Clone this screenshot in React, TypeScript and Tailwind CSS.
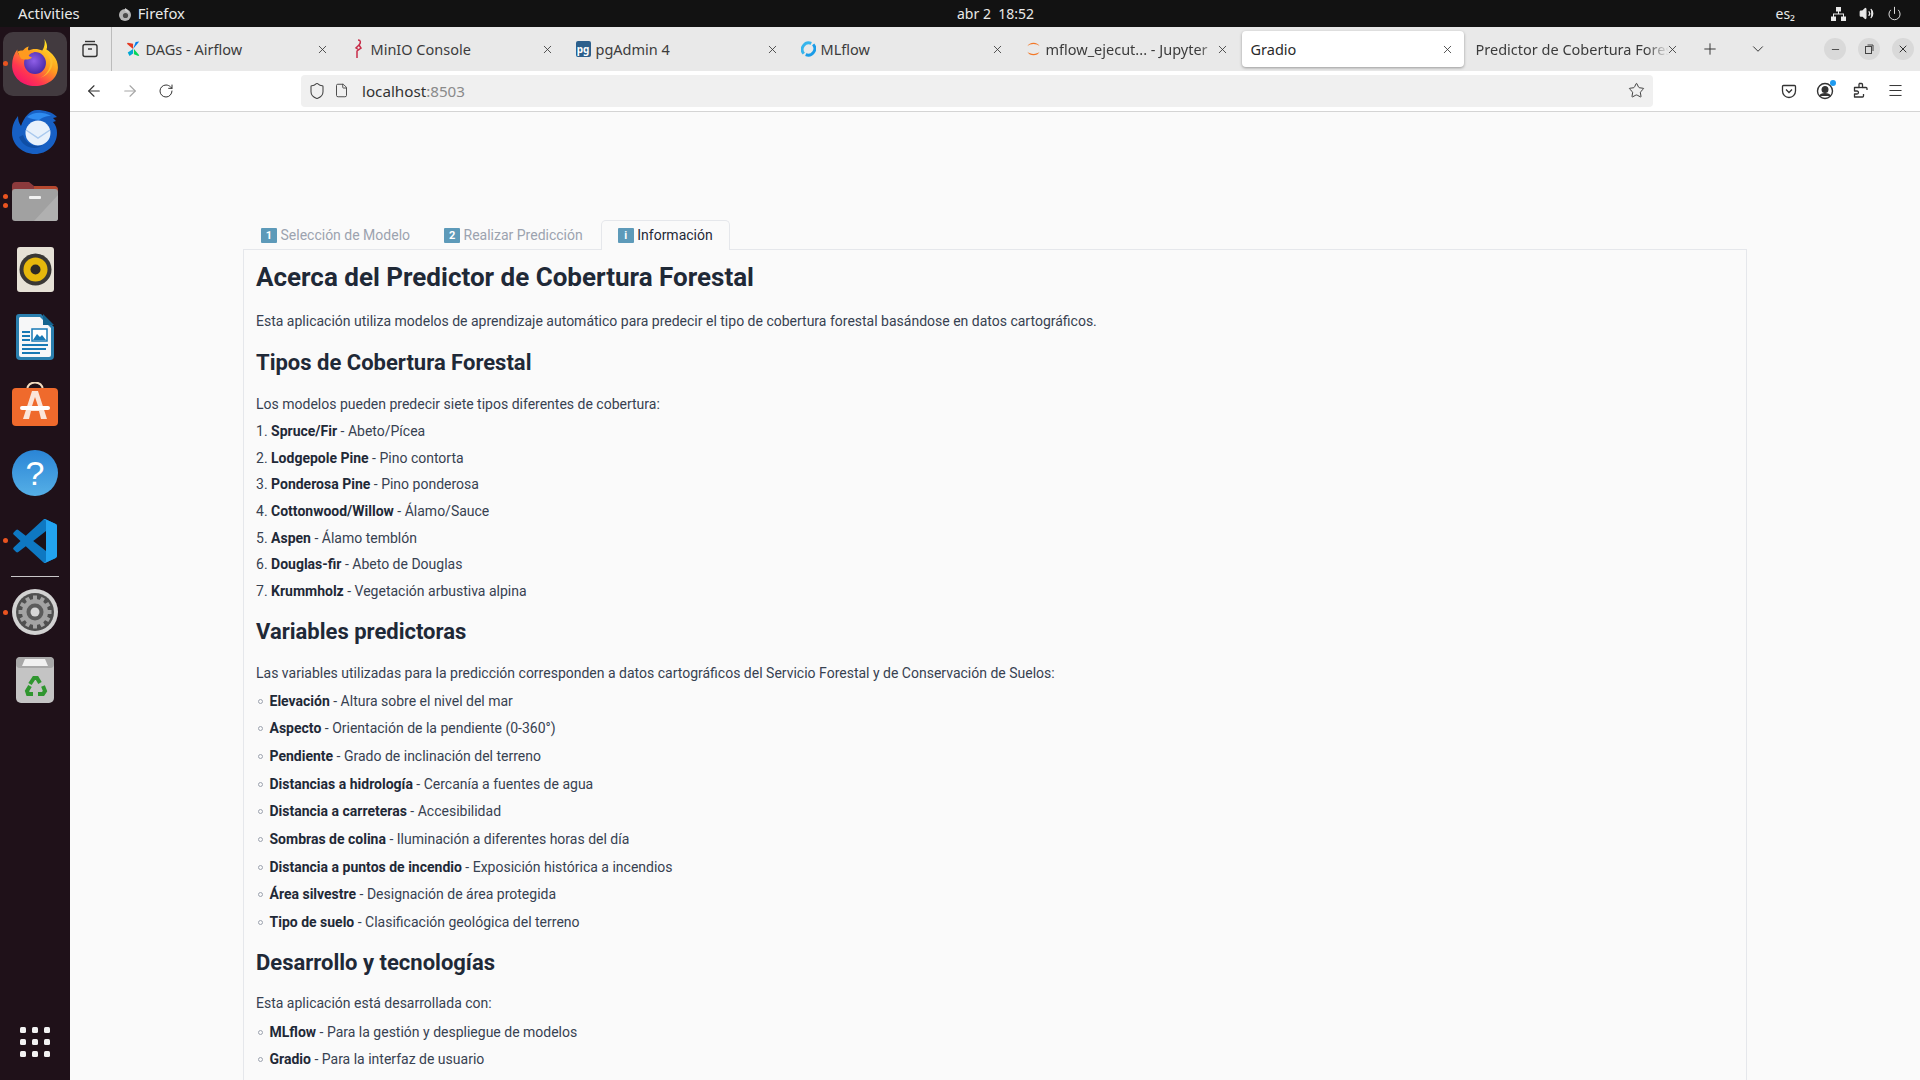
import React from "react";
import { ArrowLeft, ArrowRight, RotateCw, Shield, File, Star, Menu, Plus, ChevronDown, X, Minus, Volume2, Power } from "lucide-react";

const ui = "font-['Noto_Sans','Liberation_Sans',sans-serif]";

function Firefox({ size = 50 }: { size?: number }) {
  return (
    <svg width={size} height={size} viewBox="0 0 48 48">
      <defs>
        <linearGradient id="ffa" x1="0.8" y1="0.1" x2="0.2" y2="0.95">
          <stop offset="0" stopColor="#ffe226" />
          <stop offset="0.4" stopColor="#ff9a1f" />
          <stop offset="0.75" stopColor="#ff3750" />
          <stop offset="1" stopColor="#f5156c" />
        </linearGradient>
        <radialGradient id="ffb" cx="0.45" cy="0.4" r="0.6">
          <stop offset="0" stopColor="#8f5fe8" />
          <stop offset="1" stopColor="#4a2aa8" />
        </radialGradient>
      </defs>
      <path d="M33 2c3 5 3 8 2 10 5 3 11 9 11 17 0 11-10 18-22 18S2 39 2 27c0-6 2-11 5-15 0 3 1 5 3 6 1-4 4-8 8-9-1 2-1 3 0 4 3-2 9-2 13 0 2-3 3-7 2-11z" fill="url(#ffa)" />
      <circle cx="24" cy="25" r="10.5" fill="url(#ffb)" />
      <path d="M7 14c4-2 7-1 9 0 2-1 5-1 7 1-3 0-5 2-5 3 0 1 3 1 3 2-2 2-7 2-9 1-2 1-3-4-5-7z" fill="#ff9a1f" />
      <path d="M34 14c4 4 6 10 4 15-1 4-5 9-9 10 5-1 12-7 12-15 0-4-3-8-7-10z" fill="#ffbd2e" />
    </svg>
  );
}

function Thunderbird() {
  return (
    <svg width="50" height="50" viewBox="0 0 50 50">
      <path d="M27 2c8 0 15 2 20 7l-4 1 3 3-3 1c3 3 4 7 4 11 0 12-10 21-22 21S2 37 2 25c0-7 2-12 6-17 0 4 1 7 3 10C14 9 20 2 27 2z" fill="#1760c4" />
      <path d="M17 9c6-5 16-6 24-1-6 0-9 2-12 4-5-1-8-1-12-3z" fill="#2f8cf0" />
      <circle cx="28" cy="25" r="12.500" fill="#e8f1fb" />
      <path d="M16 22l12 8 12-8" fill="none" stroke="#a9c9ee" strokeWidth="1.500" />
      <path d="M13 27c3 9 12 13 20 10-7 6-20 3-24-8z" fill="#0f4ea5" />
    </svg>
  );
}

function Files() {
  return (
    <svg width="46" height="40" viewBox="0 0 46 40">
      <path d="M0 5a4 4 0 0 1 4-4h13l5 4h20a4 4 0 0 1 4 4v8H0z" fill="#8c3a3c" />
      <path d="M22 5h20a4 4 0 0 1 4 4v8H22z" fill="#b5482f" />
      <rect y="8" width="46" height="32" rx="3" fill="#a1a1a1" />
      <path d="M46 14v23a3 3 0 0 1-3 3H22z" fill="#b0b0b0" />
      <rect x="17" y="15" width="12" height="3" rx="1" fill="#f2f2f2" />
    </svg>
  );
}

function Rhythmbox() {
  return (
    <div className="w-[37px] h-[45px] rounded-[3px] bg-[#e6e1d6] flex items-center justify-center">
      <svg width="33" height="33" viewBox="0 0 33 33">
        <circle cx="16.500" cy="16.500" r="16" fill="#3a3835" />
        <circle cx="16.500" cy="16.500" r="12" fill="#e6b80c" />
        <circle cx="16.500" cy="16.500" r="5" fill="#2c2a26" />
      </svg>
    </div>
  );
}

function Writer() {
  return (
    <svg width="38" height="46" viewBox="0 0 38 46">
      <path d="M3 0h22l13 13v29a4 4 0 0 1-4 4H4a4 4 0 0 1-4-4V3a3 3 0 0 1 3-3z" fill="#2a7fae" />
      <path d="M4 3h20l11 11v27a2 2 0 0 1-2 2H5a2 2 0 0 1-2-2V4z" fill="#f6f7f8" />
      <path d="M27 0l11 11H27z" fill="#14648f" />
      <g fill="#1779b5">
        <rect x="6" y="17" width="8" height="2" />
        <rect x="6" y="21" width="8" height="2" />
        <rect x="6" y="25" width="8" height="2" />
        <rect x="6" y="30" width="26" height="2" />
        <rect x="6" y="34" width="24" height="2" />
        <rect x="6" y="38" width="18" height="2" />
      </g>
      <rect x="16" y="15" width="15" height="12" fill="#fff" stroke="#1779b5" strokeWidth="1.500" />
      <path d="M17 26l4-6 3 3 2-2 4 5z" fill="#1779b5" />
    </svg>
  );
}

function Software() {
  return (
    <svg width="46" height="46" viewBox="0 0 46 46">
      <path d="M15 8c0-10 16-10 16 0" fill="none" stroke="#f2dcc0" strokeWidth="2" />
      <rect y="6" width="46" height="38" rx="4" fill="#ef6a2c" />
      <path d="M20 9h6l9 28h-6l-2-8H19l-2 8h-6z" fill="#fbe4d8" />
      <path d="M23 15l-3 9h6z" fill="#ef6a2c" />
      <rect x="8" y="24" width="30" height="4" rx="2" fill="#fff" />
    </svg>
  );
}

function Help() {
  return (
    <div className="w-[46px] h-[46px] rounded-full bg-gradient-to-b from-[#2a85d6] to-[#55afe6] flex items-center justify-center">
      <span className="text-white text-[34px] leading-none font-['Liberation_Sans',sans-serif]">?</span>
    </div>
  );
}

function VSCode() {
  return (
    <svg width="44" height="44" viewBox="0 0 100 100">
      <path d="M96 11 75 1a6 6 0 0 0-7 1L29 38 12 25a4 4 0 0 0-5 0L2 30a4 4 0 0 0 0 6l15 14L2 64a4 4 0 0 0 0 6l5 5a4 4 0 0 0 5 0l17-13 39 36a6 6 0 0 0 7 1l21-10a6 6 0 0 0 4-6V17a6 6 0 0 0-4-6z" fill="#0e78c2" />
      <path d="M75 73 46 50l29-23z" fill="#1b1018" />
      <path d="M68 2a6 6 0 0 1 7-1l21 10a6 6 0 0 1 4 6v66a6 6 0 0 1-4 6L75 99a6 6 0 0 1-7-1c3 2 7 0 7-3V5c0-3-4-5-7-3z" fill="#22a3f0" />
    </svg>
  );
}

function Settings() {
  const teeth = [0, 30, 60, 90, 120, 150];
  return (
    <svg width="46" height="46" viewBox="0 0 46 46">
      <circle cx="23" cy="23" r="23" fill="#d2d2d2" />
      <circle cx="23" cy="23" r="19" fill="#4f4f4f" />
      {teeth.map((a) => (
        <rect key={a} x="21" y="6.500" width="4" height="33" fill="#a3a3a3" transform={`rotate(${a} 23 23)`} />
      ))}
      <circle cx="23" cy="23" r="13" fill="#a3a3a3" />
      <circle cx="23" cy="23" r="8.500" fill="#5c5c5c" />
      <circle cx="23" cy="23" r="4.500" fill="#d8d8d8" />
    </svg>
  );
}

function Trash() {
  return (
    <svg width="38" height="46" viewBox="0 0 38 46">
      <rect width="38" height="46" rx="5" fill="#c4c4c4" />
      <rect x="0" y="0" width="38" height="11" rx="4" fill="#a8a8a8" />
      <path d="M6 9l3-7h20l3 7z" fill="#f1f1f1" />
      <g fill="none" stroke="#2f962f" strokeWidth="4">
        <path d="M14 27l4-6h3l3 5" />
        <path d="M27 29l2 5-2 3h-5" />
        <path d="M17 37h-5l-1-3 3-5" />
      </g>
    </svg>
  );
}

function Dot({ top }: { top: number }) {
  return <span className="absolute left-[3px] w-[5px] h-[5px] rounded-full bg-[#e95420]" style={{ top }} />;
}

function DockItem({ children, dots = [] }: { children: React.ReactNode; dots?: number[] }) {
  return (
    <div className="relative h-[68px] w-full flex items-center justify-center">
      {dots.map((d) => (
        <Dot key={d} top={d} />
      ))}
      {children}
    </div>
  );
}

function Dock() {
  return (
    <aside className="w-[70px] shrink-0 bg-[#1f1119] flex flex-col items-center pt-[4px] pb-[23px]">
      <DockItem dots={[30]}>
        <div className="w-[64px] h-[64px] rounded-[10px] bg-[#423a3f] flex items-center justify-center mb-[3px] pb-[3px]">
          <Firefox />
        </div>
      </DockItem>
      <DockItem><Thunderbird /></DockItem>
      <DockItem dots={[27, 36]}><Files /></DockItem>
      <DockItem><Rhythmbox /></DockItem>
      <DockItem><Writer /></DockItem>
      <DockItem><Software /></DockItem>
      <DockItem><Help /></DockItem>
      <DockItem dots={[31]}><VSCode /></DockItem>
      <div className="w-[48px] h-px bg-[#c9c6c8] mt-[1px] mb-[1px]" />
      <DockItem dots={[32]}><Settings /></DockItem>
      <DockItem><Trash /></DockItem>
      <div className="mt-auto grid grid-cols-3 gap-[6px]">
        {Array.from({ length: 9 }).map((_, i) => (
          <span key={i} className="w-[6px] h-[6px] rounded-[1.500px] bg-[#f2f2f2]" />
        ))}
      </div>
    </aside>
  );
}

function TopBar() {
  return (
    <header className={`${ui} h-[27px] shrink-0 bg-[#121212] text-[#e9e9e9] text-[14px] flex items-center relative`}>
      <span className="ml-[18px] text-[14.800px]">Activities</span>
      <span className="ml-[38px] flex items-center gap-[6px] text-[14.800px]">
        <svg width="14" height="14" viewBox="0 0 14 14">
          <circle cx="7" cy="8" r="6" fill="#b5b5b5" />
          <circle cx="7.500" cy="8.500" r="2.600" fill="#4a4a4a" />
          <path d="M7 1c2 1 4 3 4 5L7 4z" fill="#d0d0d0" />
        </svg>
        Firefox
      </span>
      <span className="absolute left-[957px] whitespace-pre">abr 2  18:52</span>
      <span className="ml-auto mr-[36px]">es₂</span>
      <span className="flex items-center gap-[13px] mr-[18px] text-[#e9e9e9]">
        <svg width="15" height="14" viewBox="0 0 15 14" fill="currentColor">
          <rect x="5" y="0" width="5" height="4.500" />
          <rect x="0" y="9.500" width="5" height="4.500" />
          <rect x="10" y="9.500" width="5" height="4.500" />
          <path d="M7 4h1v2.500h5V10h-1V7.500H3V10H2V6.500h5z" />
        </svg>
        <Volume2 size={15} strokeWidth={2} fill="currentColor" />
        <Power size={15} strokeWidth={1.500} />
      </span>
    </header>
  );
}

type TabData = { title: string; icon: React.ReactNode; active?: boolean; fade?: boolean };

const tabs: TabData[] = [
  {
    title: "DAGs - Airflow",
    icon: (
      <svg width="17" height="18" viewBox="0 0 17 18">
        <path d="M8 9 1 3l1-1 6 1z" fill="#e43921" />
        <path d="M8 9l3-8 4-.5z" fill="#017cee" />
        <path d="M9 9l6 7-1 1-5-2z" fill="#04d659" />
        <path d="M8 9 2 13l2 4 4-3z" fill="#00a7d4" />
      </svg>
    ),
  },
  {
    title: "MinIO Console",
    icon: (
      <svg width="12" height="20" viewBox="0 0 12 20">
        <path d="M6 1c3 0 3 3 1 5l2 3-4 3v7M7 6 4 9l3 2" fill="none" stroke="#c72c48" strokeWidth="1.500" />
      </svg>
    ),
  },
  {
    title: "pgAdmin 4",
    icon: (
      <div className="w-[16px] h-[16px] rounded-[2px] bg-[#2c5f8c] flex items-center justify-center text-white text-[10px] font-bold leading-none">
        pg
      </div>
    ),
  },
  {
    title: "MLflow",
    icon: (
      <svg width="18" height="18" viewBox="0 0 16 16">
        <path d="M3 13A7 7 0 0 1 11 2" fill="none" stroke="#37b5ec" strokeWidth="3" />
        <path d="M13 3a7 7 0 0 1-8 11" fill="none" stroke="#1a9ce8" strokeWidth="3" />
      </svg>
    ),
  },
  {
    title: "mflow_ejecut... - Jupyter",
    fade: true,
    icon: (
      <svg width="18" height="20" viewBox="0 0 16 18">
        <path d="M1.500 6c2-5 11-5 13 0-3-3-10-3-13 0zM1.500 12c2 5 11 5 13 0-3 3-10 3-13 0z" fill="#f37726" />
      </svg>
    ),
  },
  { title: "Gradio", active: true, icon: null },
  { title: "Predictor de Cobertura Forestal", fade: true, icon: null },
];

function Tab({ t }: { t: TabData }) {
  return (
    <div
      className={`relative h-[36px] w-[222px] shrink-0 flex items-center rounded-[4px] mr-[3px] pl-[9px] pr-[8px] ${
        t.active ? "bg-white shadow-[0_1px_3px_rgba(0,0,0,0.35)] text-[#2a2a2a]" : "text-[#3c3c3c]"
      }`}
    >
      {t.icon && <span className="w-[15px] shrink-0 flex items-center justify-center mr-[5px]">{t.icon}</span>}
      <span
        className={`overflow-hidden whitespace-nowrap flex-1 mr-[12px] pt-[2px] ${
          t.fade ? "[mask-image:linear-gradient(to_right,black_88%,transparent)]" : ""
        }`}
      >
        {t.title}
      </span>
      <X size={13} strokeWidth={1.500} className="absolute right-[10px] text-[#333]" />
    </div>
  );
}

function TabBar() {
  return (
    <div className={`${ui} h-[44px] bg-[#e9e9e9] flex items-center text-[14.500px]`}>
      <div className="w-[21px] flex justify-center ml-[9px] shrink-0">
        <svg width="18" height="18" viewBox="0 0 18 18" fill="none" stroke="#333" strokeWidth="1.400">
          <path d="M4 1.500h10" />
          <rect x="2" y="4.500" width="14" height="12" rx="2" />
          <path d="M7 9h4" />
        </svg>
      </div>
      <div className="w-px h-[44px] bg-[#bcbcbc] ml-[11px] mr-[4.500px]" />
      <div className="flex items-center">
        {tabs.map((t) => (
          <Tab key={t.title} t={t} />
        ))}
      </div>
      <Plus size={18} strokeWidth={1.300} className="ml-[9px] text-[#333] shrink-0" />
      <ChevronDown size={18} strokeWidth={1.300} className="ml-[30px] text-[#333] shrink-0" />
      <div className="ml-auto mr-[6px] flex items-center gap-[12px]">
        <span className="w-[22px] h-[22px] rounded-full bg-[#d9d9d9] flex items-center justify-center">
          <Minus size={11} className="text-[#444]" />
        </span>
        <span className="w-[22px] h-[22px] rounded-full bg-[#d9d9d9] flex items-center justify-center">
          <svg width="10" height="10" viewBox="0 0 10 10" fill="none" stroke="#444" strokeWidth="1">
            <rect x="1.500" y="2.500" width="6" height="7" />
            <path d="M3.500 1h5.500v6" />
          </svg>
        </span>
        <span className="w-[22px] h-[22px] rounded-full bg-[#d9d9d9] flex items-center justify-center">
          <X size={12} className="text-[#333]" />
        </span>
      </div>
    </div>
  );
}

function ToolBar() {
  return (
    <div className={`${ui} h-[41px] bg-white border-b border-[#d4d4d4] flex items-center shrink-0 pb-[1px]`}>
      <ArrowLeft size={18} strokeWidth={1.500} className="ml-[15px] text-[#333]" />
      <ArrowRight size={18} strokeWidth={1.500} className="ml-[18px] text-[#a6a6a6]" />
      <RotateCw size={16} strokeWidth={1.500} className="ml-[19px] text-[#333]" />
      <div className="ml-[127px] w-[1352px] h-[32px] rounded-[4px] bg-[#f0f0f0] flex items-center text-[15.200px]">
        <Shield size={18} strokeWidth={1.400} className="ml-[7px] text-[#444]" />
        <File size={15} strokeWidth={1.500} className="ml-[8px] text-[#444]" />
        <span className="ml-[13px] text-[#333] pt-[1px]">localhost<span className="text-[#8a8a8a]">:8503</span></span>
        <Star size={17} strokeWidth={1.300} className="ml-auto mr-[8px] text-[#333]" />
      </div>
      <div className="ml-auto mr-[16px] flex items-center gap-[18px] text-[#333]">
        <svg width="16" height="16" viewBox="0 0 16 16" fill="none" stroke="#333" strokeWidth="1.300" className="mr-[1px]">
          <path d="M2.500 2.500h11a1 1 0 0 1 1 1V8a6.500 6.500 0 0 1-13 0V3.500a1 1 0 0 1 1-1z" />
          <path d="M5 6.500l3 3 3-3" />
        </svg>
        <span className="relative w-[18px] h-[18px]">
          <svg width="18" height="18" viewBox="0 0 18 18" fill="none" stroke="#333" strokeWidth="1.400">
            <circle cx="9" cy="9" r="7.500" />
            <circle cx="9" cy="7.500" r="2.800" fill="#333" />
            <path d="M4 14c1-3 9-3 10 0" fill="#333" />
          </svg>
          <span className="absolute top-[-2px] right-[-2px] w-[6px] h-[6px] rounded-full bg-[#1f9bf0]" />
        </span>
        <svg width="17" height="17" viewBox="0 0 17 17" fill="none" stroke="#333" strokeWidth="1.300" strokeLinejoin="round">
          <path d="M7 1.500h2.500a1 1 0 0 1 1 1V5.500H14a1 1 0 0 1 1 1V8M7 1.500v4H2.500v3.500H5a1.500 1.500 0 0 1 0 3H2.500v3h8a1 1 0 0 0 1-1V12" />
          <path d="M7 5.500h3.500" />
        </svg>
        <Menu size={17} strokeWidth={1.400} />
      </div>
    </div>
  );
}

function Keycap({ label }: { label: string }) {
  return (
    <span className="flex w-[16px] h-[15px] mr-[3.500px] items-center justify-center rounded-[1px] bg-[#5d9ab9] text-white text-[11px] font-bold leading-none shrink-0">
      {label}
    </span>
  );
}

const especies: [string, string][] = [
  ["Spruce/Fir", "Abeto/Pícea"],
  ["Lodgepole Pine", "Pino contorta"],
  ["Ponderosa Pine", "Pino ponderosa"],
  ["Cottonwood/Willow", "Álamo/Sauce"],
  ["Aspen", "Álamo temblón"],
  ["Douglas-fir", "Abeto de Douglas"],
  ["Krummholz", "Vegetación arbustiva alpina"],
];

const variables: [string, string][] = [
  ["Elevación", "Altura sobre el nivel del mar"],
  ["Aspecto", "Orientación de la pendiente (0-360°)"],
  ["Pendiente", "Grado de inclinación del terreno"],
  ["Distancias a hidrología", "Cercanía a fuentes de agua"],
  ["Distancia a carreteras", "Accesibilidad"],
  ["Sombras de colina", "Iluminación a diferentes horas del día"],
  ["Distancia a puntos de incendio", "Exposición histórica a incendios"],
  ["Área silvestre", "Designación de área protegida"],
  ["Tipo de suelo", "Clasificación geológica del terreno"],
];

const tecnologias: [string, string][] = [
  ["MLflow", "Para la gestión y despliegue de modelos"],
  ["Gradio", "Para la interfaz de usuario"],
];

function Bullets({ items }: { items: [string, string][] }) {
  return (
    <ul>
      {items.map(([b, d]) => (
        <li key={b} className="h-[27.700px] flex items-center">
          <span className="w-[5px] h-[5px] rounded-full border border-[#9ca3af] ml-[2px] mr-[6.500px] shrink-0" />
          <span>
            <b className="font-bold text-[#1f2937]">{b}</b> - {d}
          </span>
        </li>
      ))}
    </ul>
  );
}

function H2({ children, className = "" }: { children: React.ReactNode; className?: string }) {
  return <h2 className={`text-[22px] leading-[30px] font-bold text-[#1f2937] ${className}`}>{children}</h2>;
}

function Page() {
  return (
    <main className="flex-1 min-h-0 overflow-hidden bg-[#fafafa] font-['Roboto',sans-serif] text-[14px] text-[#374151] pt-[108px]">
      <div className="ml-[173px] w-[1504px]">
        <div className="flex h-[29px] items-center relative z-10">
          <div className="ml-[18px] text-[#9ca3af] flex items-center pt-[1px]"><Keycap label="1" />Selección de Modelo</div>
          <div className="ml-[34px] text-[#9ca3af] flex items-center pt-[1px]"><Keycap label="2" />Realizar Predicción</div>
          <div className="ml-[18px] h-[30px] w-[129px] mb-[-1px] bg-[#fafafa] border border-b-0 border-[#e5e7eb] rounded-t-[5px] flex items-center justify-center text-[#1f2937]">
            <Keycap label="i" />Información
          </div>
        </div>
        <section className="border border-[#e5e7eb] px-[12px] pt-[10px] h-[900px]">
          <h1 className="text-[26px] leading-[34px] font-bold text-[#1f2937]">Acerca del Predictor de Cobertura Forestal</h1>
          <p className="mt-[16.500px] leading-[20px]">Esta aplicación utiliza modelos de aprendizaje automático para predecir el tipo de cobertura forestal basándose en datos cartográficos.</p>
          <H2 className="mt-[17px]">Tipos de Cobertura Forestal</H2>
          <p className="mt-[16px] leading-[20px]">Los modelos pueden predecir siete tipos diferentes de cobertura:</p>
          <ol className="mt-[5px]">
            {especies.map(([b, d], i) => (
              <li key={b} className="h-[26.600px] flex items-center">
                <span>
                  {i + 1}. <b className="font-bold text-[#1f2937]">{b}</b> - {d}
                </span>
              </li>
            ))}
          </ol>
          <H2 className="mt-[12.500px]">Variables predictoras</H2>
          <p className="mt-[16px] leading-[20px] mb-[4px]">Las variables utilizadas para la predicción corresponden a datos cartográficos del Servicio Forestal y de Conservación de Suelos:</p>
          <Bullets items={variables} />
          <H2 className="mt-[11.500px]">Desarrollo y tecnologías</H2>
          <p className="mt-[15px] leading-[20px] mb-[5.500px]">Esta aplicación está desarrollada con:</p>
          <Bullets items={tecnologias} />
        </section>
      </div>
    </main>
  );
}

export default function App() {
  return (
    <div className="w-[1920px] h-[1080px] overflow-hidden flex flex-col">
      <TopBar />
      <div className="flex flex-1 min-h-0">
        <Dock />
        <div className="flex-1 min-w-0 flex flex-col">
          <TabBar />
          <ToolBar />
          <Page />
        </div>
      </div>
    </div>
  );
}
